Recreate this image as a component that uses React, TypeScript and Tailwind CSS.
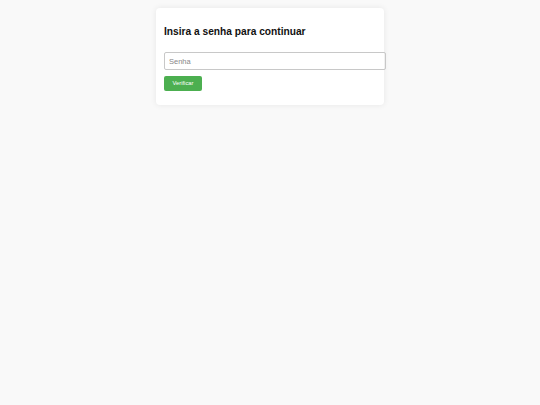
export default function App() {
  return (
    <div className="min-h-screen w-full bg-[#f9f9f9] font-['Liberation_Sans',Arial,sans-serif]">
      <div className="mx-auto w-[228px] pt-2">
        <div className="rounded-[4px] bg-white px-2 pt-[17px] pb-[14px] shadow-[0_0_6px_rgba(0,0,0,0.08)]">
          <h2 className="text-[10.2px] leading-[14px] font-bold text-[#111]">
            Insira a senha para continuar
          </h2>
          <input
            type="password"
            placeholder="Senha"
            className="mt-[13px] box-content block h-[16px] w-full border border-[#c8c8c8] rounded-[2px] px-[4px] py-0 text-[7.5px] text-[#333] placeholder:text-[#888] outline-none"
          />
          <button className="mt-[6px] block h-[15px] w-[38px] rounded-[2px] bg-[#4caf50] text-[5.8px] text-white">
            Verificar
          </button>
        </div>
      </div>
    </div>
  );
}
